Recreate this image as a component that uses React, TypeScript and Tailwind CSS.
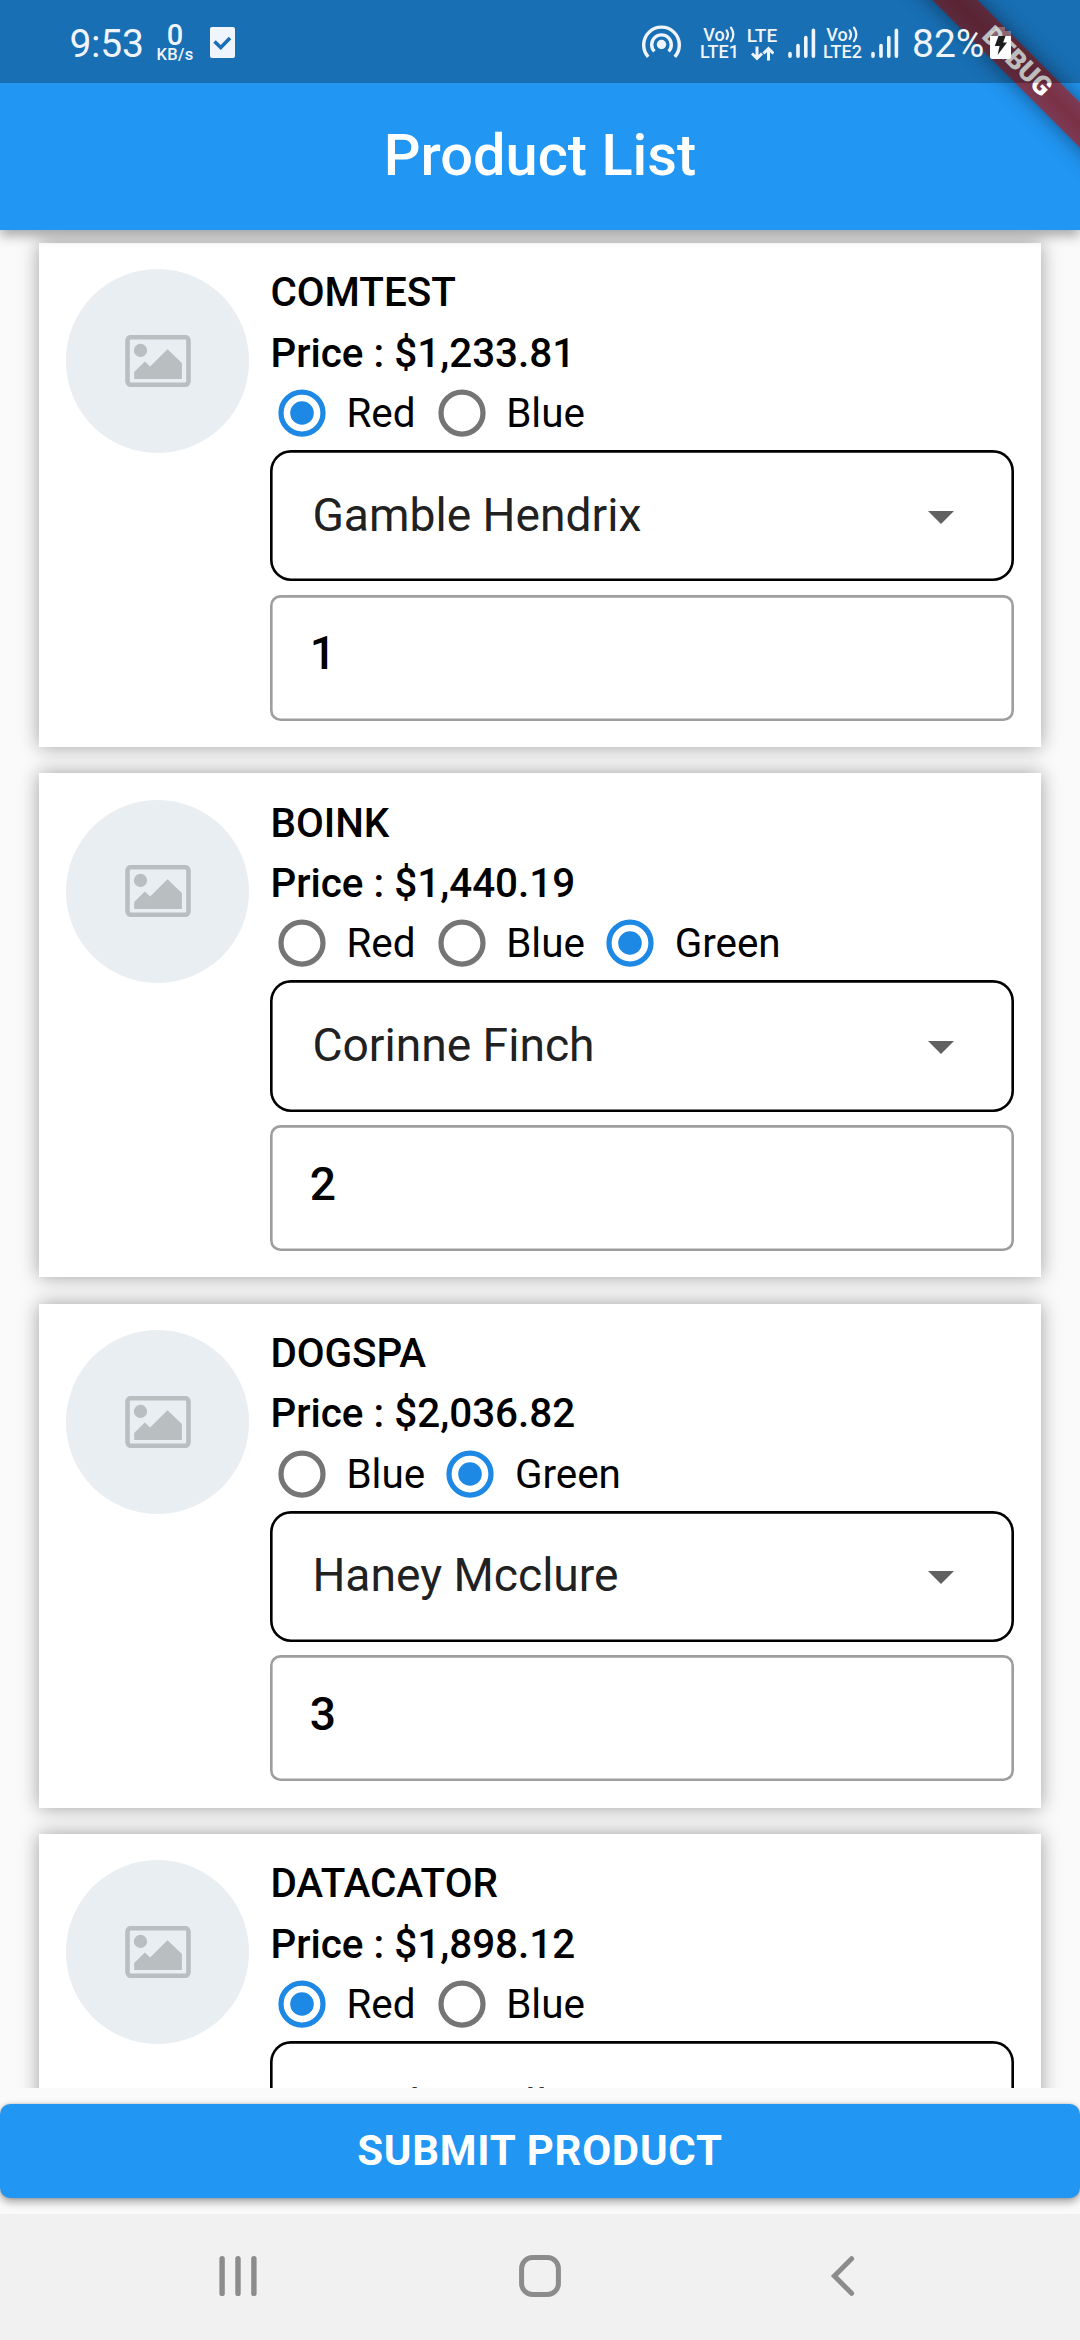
import { useState } from "react";

type Product = {
  name: string;
  price: string;
  colors: string[];
  color: string;
  owner: string;
  quantity: string;
};

const products: Product[] = [
  { name: "COMTEST", price: "$1,233.81", colors: ["Red", "Blue"], color: "Red", owner: "Gamble Hendrix", quantity: "1" },
  { name: "BOINK", price: "$1,440.19", colors: ["Red", "Blue", "Green"], color: "Green", owner: "Corinne Finch", quantity: "2" },
  { name: "DOGSPA", price: "$2,036.82", colors: ["Blue", "Green"], color: "Green", owner: "Haney Mcclure", quantity: "3" },
  { name: "DATACATOR", price: "$1,898.12", colors: ["Red", "Blue"], color: "Red", owner: "Carol Small", quantity: "" },
];

function SignalBars() {
  return (
    <svg className="h-[31px] w-[28px]" viewBox="0 0 28 31" fill="none" stroke="#f0f4fc" strokeWidth="3.6" strokeLinecap="round">
      <path d="M2 25.5v2.7M10 17.5v10.7M17.8 9.5v18.7M25.4 2.3v25.9" />
    </svg>
  );
}

function VoLte({ label }: { label: string }) {
  return (
    <div className="flex flex-col items-center">
      <div className="flex h-[17px] items-center">
        <span className="text-[18px] leading-[17px]">Vo</span>
        <svg className="h-[17px] w-[11px]" viewBox="0 0 11 17" fill="none" stroke="#f0f4fc" strokeWidth="2.2" strokeLinecap="round">
          <path d="M1.6 4.4q2.8 4.2 0 8.4M6 1.6q4.6 6.8 0 13.6" />
        </svg>
      </div>
      <span className="text-[18px] leading-[17px]">{label}</span>
    </div>
  );
}

function StatusBar() {
  return (
    <div className="absolute inset-x-0 top-0 z-30 flex h-[83px] items-start bg-black/26 font-medium text-[#f0f4fc]">
      <span className="ml-[69.5px] mt-[21px] w-[76px] text-[39px] font-normal leading-[46px] tracking-[-0.3px]">9:53</span>
      <div className="ml-[10.5px] mt-[23px] flex w-[38px] flex-col items-center">
        <span className="text-[29px] leading-[24px]">0</span>
        <span className="text-[16.5px] leading-[16px] tracking-[0.3px]">KB/s</span>
      </div>
      <svg className="ml-[16px] mt-[27px] h-[31px] w-[25px]" viewBox="0 0 25 31">
        <rect width="25" height="31" rx="2" fill="#f0f4fc" />
        <path d="M4.5 14.5l6.3 6 9.2-9.5" fill="none" stroke="#1a6fb5" strokeWidth="3.6" />
      </svg>
      <svg className="ml-[407px] mt-[25px] h-[36px] w-[39px]" viewBox="0 0 39 36" fill="none" stroke="#f0f4fc" strokeWidth="3.4">
        <path d="M6.2 31.8A17.8 17.8 0 1 1 32.8 31.8" />
        <path d="M12.4 26.4A9.8 9.8 0 1 1 26.6 26.4" />
        <circle cx="19.5" cy="19.5" r="4.7" fill="#f0f4fc" stroke="none" />
      </svg>
      <div className="ml-[18.5px] mt-[26px] flex w-[40px] justify-center"><VoLte label="LTE1" /></div>
      <div className="ml-[6px] mt-[27px] flex w-[33px] flex-col items-center">
        <span className="text-[19px] leading-[17px]">LTE</span>
        <svg className="mt-[2px] h-[15px] w-[23px]" viewBox="0 0 23 15" fill="none" stroke="#f0f4fc" strokeWidth="3">
          <path d="M6 .5v11.5M1 7.5l5 5 5-5M17.5 14.5V3M12.5 7.5l5-5 5 5" />
        </svg>
      </div>
      <div className="ml-[9px] mt-[28px]"><SignalBars /></div>
      <div className="ml-[7px] mt-[26px] flex w-[40px] justify-center"><VoLte label="LTE2" /></div>
      <div className="ml-[8px] mt-[28px]"><SignalBars /></div>
      <span className="ml-[13.5px] mt-[21px] w-[76px] text-[39px] font-normal leading-[46px]">82%</span>
      <svg className="ml-[2px] mt-[27px] h-[32px] w-[21px]" viewBox="0 0 21 32">
        <path d="M5 0h10v4h6v5H0V4h5z" fill="#f0f4fc" fillOpacity="0.3" />
        <path d="M0 9h21v21q0 2-2 2H2q-2 0-2-2z" fill="#ffffff" />
        <path d="M8.5 9h7l-2.4 6.5H17L7.6 28l2-9H4.8z" fill="#1c1c1c" />
      </svg>
    </div>
  );
}

function DebugBanner() {
  return (
    <div className="absolute left-[842px] top-[46.3px] z-20 flex h-[31.5px] w-[350px] rotate-45 items-center justify-center bg-[linear-gradient(#7c3a54,#7a3145_50%,#7c3a54)] text-[26.8px] font-black leading-[31px] text-white shadow-[0_0_21px_rgba(0,0,0,0.45)]">
      DEBUG
    </div>
  );
}

function Radio({ checked }: { checked: boolean }) {
  return (
    <svg className="h-[48px] w-[48px]" viewBox="0 0 48 48" fill="none" stroke={checked ? "#1e88e5" : "#757575"}>
      <circle cx="24" cy="24" r="21" strokeWidth="5.25" />
      {checked && <circle cx="24" cy="24" r="11.8" fill="#1e88e5" stroke="none" />}
    </svg>
  );
}

function Placeholder() {
  return (
    <div className="flex h-[183.75px] w-[183.75px] shrink-0 items-center justify-center rounded-full bg-[#e8eef1]">
      <svg className="h-[52px] w-[66px]" viewBox="0 0 66 52">
        <rect x="2.5" y="2.2" width="61" height="47.6" rx="3.5" fill="none" stroke="#b9bec1" strokeWidth="4.6" />
        <circle cx="15.5" cy="15.4" r="6.6" fill="#b9bec1" />
        <path d="M9.2 44V37l10.6-10.4 5.3 4.8 17.4-17.2 14.4 13.9V44z" fill="#b9bec1" />
      </svg>
    </div>
  );
}

function ProductCard({ product }: { product: Product }) {
  const [color, setColor] = useState(product.color);
  return (
    <article className="flex h-[504px] shrink-0 gap-[21px] bg-white p-[26.25px] shadow-[0_0_18px_#9e9e9e]">
      <Placeholder />
      <div className="min-w-0 flex-1 text-[40.425px] text-black">
        <h2 className="h-[47px] pt-[1px] font-medium leading-[46px]">{product.name}</h2>
        <p className="mt-[14.5px] h-[45px] font-medium leading-[46px]">Price : {product.price}</p>
        <div className="flex h-[74.4px] items-center gap-[13.8px]">
          {product.colors.map((c) => (
            <button key={c} className="flex items-center pl-[7.5px]" onClick={() => setColor(c)}>
              <Radio checked={c === color} />
              <span className="ml-[20.5px] min-w-[70px] pt-[2px] text-left leading-[46px]">{c}</span>
            </button>
          ))}
        </div>
        <div className="flex h-[131.25px] items-center justify-between rounded-[21px] pl-[42px] pr-[60.5px] text-[46.2px] text-[#212121] shadow-[inset_0_0_0_2.625px_#000]">
          <span className="pb-[2px] leading-[54px]">{product.owner}</span>
          <svg className="mt-[3px] h-[13px] w-[26px]" viewBox="0 0 26 13">
            <path d="M0 0h26L13 13z" fill="#616161" />
          </svg>
        </div>
        <div className="mt-[13.1px] flex h-[126px] items-center rounded-[10.5px] pb-[7px] pl-[39.4px] text-[46.2px] font-medium shadow-[inset_0_0_0_2.625px_#9e9e9e]">
          {product.quantity}
        </div>
      </div>
    </article>
  );
}

function NavigationBar() {
  return (
    <nav className="flex h-[126px] shrink-0 items-start bg-[#f1f1f1] pt-[41px]">
      <svg className="ml-[219px] h-[42px] w-[38px]" viewBox="0 0 38 42" stroke="#8c8c8c" strokeWidth="5.4" strokeLinecap="round">
        <path d="M3.1 3.6v34.8M19 3.6v34.8M34.9 3.6v34.8" />
      </svg>
      <svg className="ml-[262px] h-[42px] w-[42px]" viewBox="0 0 42 42" fill="none" stroke="#8c8c8c" strokeWidth="5">
        <rect x="2.6" y="2.5" width="36.8" height="37" rx="11" />
      </svg>
      <svg className="ml-[269px] h-[42px] w-[25px]" viewBox="0 0 25 42" fill="none" stroke="#8c8c8c" strokeWidth="5" strokeLinecap="round">
        <path d="M21.6 3.7L4.4 21l17.2 17.3" />
      </svg>
    </nav>
  );
}

export default function App() {
  return (
    <div className="relative flex h-[2340px] w-[1080px] flex-col overflow-hidden bg-[#fafafa] font-['Roboto',sans-serif]">
      <StatusBar />
      <DebugBanner />
      <header className="z-10 flex h-[230px] shrink-0 items-center justify-center bg-[#2196f3] pb-[3px] pt-[83px] shadow-[0_6px_11px_rgba(0,0,0,0.32)]">
        <h1 className="text-[57.75px] font-medium leading-[68px] text-white">Product List</h1>
      </header>
      <main className="flex h-[1858px] shrink-0 flex-col gap-[26.25px] overflow-hidden px-[39.375px] pt-[13.1px]">
        {products.map((p) => (
          <ProductCard key={p.name} product={p} />
        ))}
      </main>
      <footer className="h-[126px] shrink-0 pt-[15.75px]">
        <button className="flex h-[94.5px] w-full items-center justify-center rounded-[10.5px] bg-[#2196f3] pb-[1px] text-[42px] font-bold leading-[50px] tracking-[0.75px] text-white shadow-[0_4px_8px_rgba(0,0,0,0.35),0_0_3px_rgba(0,0,0,0.2)]">
          SUBMIT PRODUCT
        </button>
      </footer>
      <NavigationBar />
    </div>
  );
}
